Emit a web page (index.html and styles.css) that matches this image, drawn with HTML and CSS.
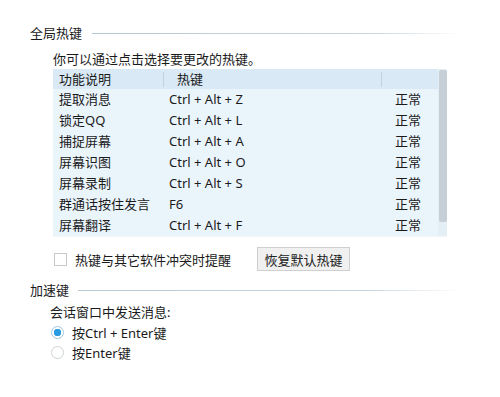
FILE: index.html
```html
<!DOCTYPE html>
<html lang="zh-CN">
<head>
    <meta charset="UTF-8">
    <title>热键设置</title>
    <link rel="stylesheet" href="styles.css">
</head>
<body>
    <div class="panel">
        <div class="section-head">
            <span class="section-title">全局热键</span>
            <span class="section-line"></span>
        </div>
        <div class="section-body">
            <p class="hint">你可以通过点击选择要更改的热键。</p>
            <div class="table">
                <div class="table-inner">
                    <div class="row head">
                        <span class="cell name">功能说明</span>
                        <span class="cell key">热键</span>
                        <span class="cell state"></span>
                    </div>
                    <div class="row"><span class="cell name">提取消息</span><span class="cell key">Ctrl + Alt + Z</span><span class="cell state">正常</span></div>
                    <div class="row"><span class="cell name">锁定QQ</span><span class="cell key">Ctrl + Alt + L</span><span class="cell state">正常</span></div>
                    <div class="row"><span class="cell name">捕捉屏幕</span><span class="cell key">Ctrl + Alt + A</span><span class="cell state">正常</span></div>
                    <div class="row"><span class="cell name">屏幕识图</span><span class="cell key">Ctrl + Alt + O</span><span class="cell state">正常</span></div>
                    <div class="row"><span class="cell name">屏幕录制</span><span class="cell key">Ctrl + Alt + S</span><span class="cell state">正常</span></div>
                    <div class="row"><span class="cell name">群通话按住发言</span><span class="cell key">F6</span><span class="cell state">正常</span></div>
                    <div class="row"><span class="cell name">屏幕翻译</span><span class="cell key">Ctrl + Alt + F</span><span class="cell state">正常</span></div>
                </div>
                <div class="scrollbar"><div class="thumb"></div></div>
            </div>
            <div class="options">
                <label class="check"><span class="box"></span>热键与其它软件冲突时提醒</label>
                <button class="btn" type="button">恢复默认热键</button>
            </div>
        </div>

        <div class="section-head second">
            <span class="section-title">加速键</span>
            <span class="section-line"></span>
        </div>
        <div class="section-body send">
            <p class="hint">会话窗口中发送消息:</p>
            <label class="radio"><span class="dot on"></span>按Ctrl + Enter键</label>
            <label class="radio"><span class="dot"></span>按Enter键</label>
        </div>
    </div>
</body>
</html>
```

FILE: styles.css
```css
* {
    margin: 0;
    padding: 0;
    box-sizing: border-box;
}

body {
    width: 500px;
    height: 397px;
    background: #fff;
    color: #1b1b1b;
    font-family: "Noto Sans", "Noto Sans CJK SC", sans-serif;
    font-size: 13px;
}

.panel {
    padding: 24px 40px 0 30px;
}

.section-head {
    display: flex;
    align-items: center;
    height: 18px;
}

.section-title {
    line-height: 18px;
}

.section-line {
    flex: 1;
    height: 1px;
    margin-left: 10px;
    background: linear-gradient(90deg, #b7c8d5, #c6d4de 75%, rgba(220, 230, 236, 0));
}

.section-head.second {
    margin-top: 10px;
}

.section-head.second .section-line {
    margin-left: 9px;
}

.section-body {
    padding-left: 23px;
}

.hint {
    line-height: 18px;
    margin-top: 8px;
    margin-bottom: 1px;
}

.table {
    display: flex;
    width: 394px;
    background: #eaf4fb;
    border-bottom: 1px solid #f2f6f9;
}

.table-inner {
    flex: 1;
}

.row {
    display: flex;
    height: 21px;
    align-items: center;
}

.row.head {
    height: 20px;
    background: #d9e9f5;
}

.cell {
    line-height: 19px;
}

.name {
    width: 110px;
    padding-left: 6px;
}

.key {
    width: 218px;
    padding-left: 6px;
    white-space: nowrap;
}

.state {
    flex: 1;
    padding-left: 14px;
}

.row.head .key,
.row.head .state {
    border-left: 1px solid #c2d3df;
    height: 15px;
    line-height: 15px;
}

.row.head .key {
    padding-left: 13px;
}

.scrollbar {
    width: 9px;
    background: #e4eef5;
}

.thumb {
    height: 152px;
    margin: 1px 0 0 1px;
    width: 8px;
    border-radius: 2px;
    background: #c6ced6;
}

.options {
    display: flex;
    align-items: center;
    margin-top: 10px;
}

.check {
    display: flex;
    align-items: center;
    width: 204px;
}

.box {
    width: 13px;
    height: 13px;
    margin: 0 8px 0 1px;
    border: 1px solid #c9c9c9;
    background: #fff;
}

.btn {
    width: 93px;
    height: 24px;
    font: inherit;
    color: #222;
    background: #f0f0f0;
    border: 1px solid #cfcfcf;
}

.send .hint {
    margin-top: 4px;
    margin-bottom: 1px;
}

.send {
    padding-left: 20px;
}

.radio {
    display: flex;
    align-items: center;
    height: 20px;
}

.dot {
    width: 13px;
    height: 13px;
    margin: 0 8px 0 1px;
    border: 1px solid #cdd2d6;
    border-radius: 50%;
    background: #fff;
}

.dot.on {
    border-color: #9fc6e3;
    background: radial-gradient(circle, #2a9be0 0 3.5px, #fff 4px);
}
```
